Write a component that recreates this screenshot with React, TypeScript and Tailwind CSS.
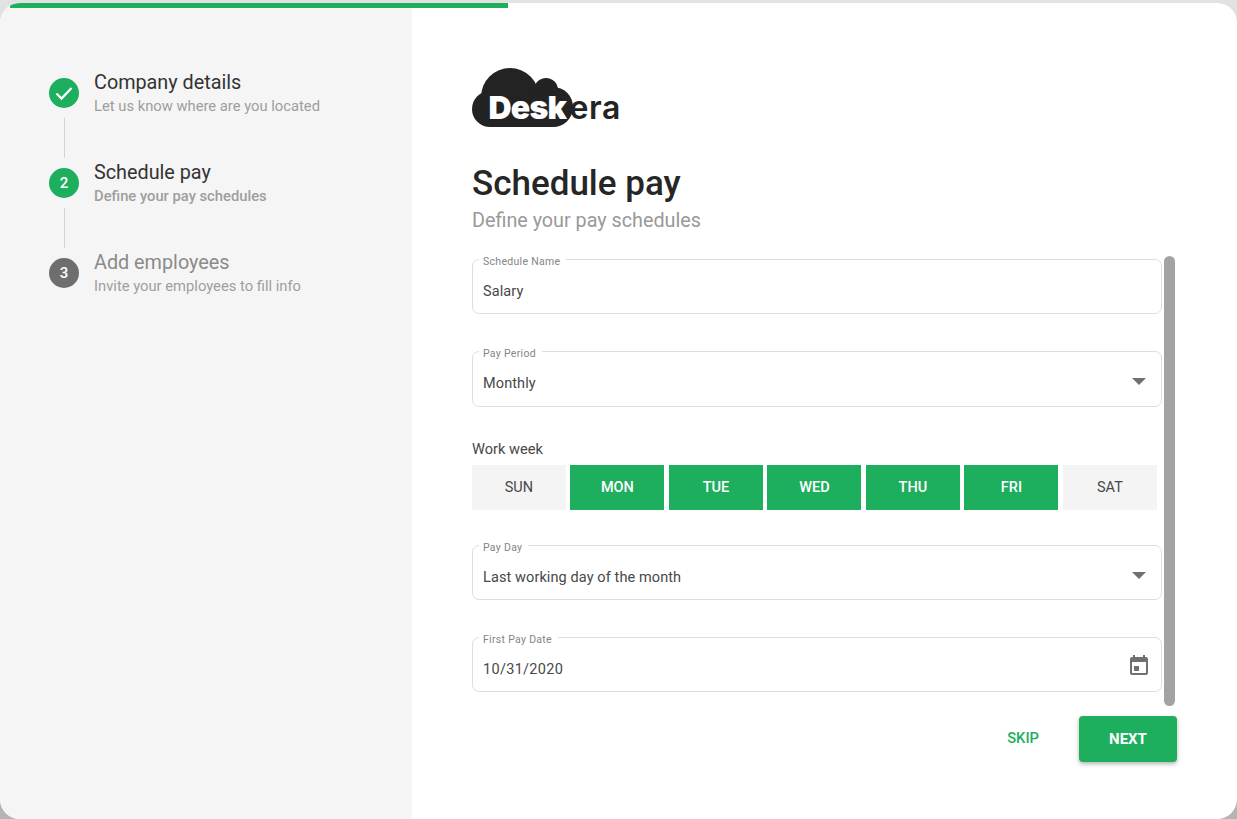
import React from "react";

const font = { fontFamily: "Roboto, sans-serif" };

function Logo() {
  return (
    <svg width="152" height="60" viewBox="472 68 152 60" className="block">
      <g fill="#232323">
        <circle cx="490" cy="109" r="18" />
        <circle cx="510" cy="97" r="29" />
        <circle cx="546" cy="90" r="12" />
        <circle cx="553" cy="107" r="20" />
        <rect x="490" y="96" width="63" height="31" />
      </g>
      <text x="488.5" y="119" fill="#fff" fontFamily="Inter, sans-serif" fontWeight="900" fontSize="32" letterSpacing="-0.8">Desk</text>
      <text x="569.5" y="119" fill="#232323" fontFamily="Inter, sans-serif" fontWeight="600" fontSize="32" letterSpacing="0.6">era</text>
    </svg>
  );
}

function Step({ badge, title, sub, titleClass, subClass, badgeClass, line }: { badge: React.ReactNode; title: string; sub: string; titleClass: string; subClass: string; badgeClass: string; line?: boolean }) {
  return (
    <div className="flex gap-[15px] h-[90px]">
      <div className="flex flex-col items-center w-[30px] pt-[8px]">
        <div className={`w-[30px] h-[30px] rounded-full flex items-center justify-center text-white text-[15px] font-medium ${badgeClass}`}>{badge}</div>
        {line && <div className="w-px h-[40px] mt-[10px] bg-[#d4d4d4]" />}
      </div>
      <div className="pt-[1px]">
        <div className={`text-[19.8px] leading-[24px] ${titleClass}`}>{title}</div>
        <div className={`text-[14.75px] leading-[20px] mt-[1px] ${subClass}`}>{sub}</div>
      </div>
    </div>
  );
}

function Field({ label, value, className, valueClass, right }: { label: string; value: string; className: string; valueClass: string; right?: React.ReactNode }) {
  return (
    <div className={`relative w-[690px] border border-[#dedede] rounded-[7px] flex items-center justify-between pl-[10px] pr-[12px] ${className}`}>
      <span className="absolute left-[6px] -top-[4px] bg-white px-[4px] pr-[6px] text-[10.5px] leading-[12px] text-[#858585] tracking-[0.3px]">{label}</span>
      <span className={`text-[14.5px] text-[#484848] ${valueClass}`}>{value}</span>
      {right}
    </div>
  );
}

const Caret = () => (
  <svg width="14" height="7" viewBox="0 0 14 7" className="mr-[3px] mt-[5px]"><path d="M0 0h14L7 7z" fill="#707070" /></svg>
);

const Calendar = () => (
  <svg width="24" height="24" viewBox="0 0 24 24" className="-mr-[2px] mt-[2px]">
    <path fill="#707070" d="M17 12h-5v5h5v-5zM16 1v2H8V1H6v2H5c-1.11 0-1.99.9-1.99 2L3 19c0 1.1.89 2 2 2h14c1.1 0 2-.9 2-2V5c0-1.1-.9-2-2-2h-1V1h-2zm3 18H5V8h14v11z" transform="translate(24 0) scale(-1 1)" />
  </svg>
);

function Day({ d, on }: { d: string; on: boolean }) {
  return (
    <div className={`h-[45px] w-[94px] flex items-center justify-center text-[14.5px] ${on ? "bg-[#1dae5e] text-white font-medium" : "bg-[#f4f4f4] text-[#484848]"}`}>{d}</div>
  );
}

export default function App() {
  return (
    <div style={font} className="h-[819px] w-[1237px] overflow-hidden pt-[3px] bg-gradient-to-b from-[#e2e2e2] to-[#b4b4b4]">
      <div className="relative flex h-[816px] rounded-[20px] overflow-hidden bg-white">
        <div className="absolute left-[10px] top-0 h-[5px] w-[498px] bg-[#1dae5e] rounded-tl-[4px]" />
        <aside className="w-[412px] bg-[#f5f5f5] pl-[49px] pt-[67px] shrink-0">
          <Step
            badge={<svg width="24" height="24" viewBox="0 0 24 24" fill="none" stroke="#fff" strokeWidth="2.3"><path d="M4.5 12.5l5 5L19.5 7" /></svg>}
            title="Company details"
            sub="Let us know where are you located"
            titleClass="text-[#333333]"
            subClass="text-[#9e9e9e]"
            badgeClass="bg-[#1dae5e]"
            line
          />
          <Step
            badge="2"
            title="Schedule pay"
            sub="Define your pay schedules"
            titleClass="text-[#333333]"
            subClass="text-[#9e9e9e] font-medium"
            badgeClass="bg-[#1dae5e]"
            line
          />
          <Step
            badge="3"
            title="Add employees"
            sub="Invite your employees to fill info"
            titleClass="text-[#8a8a8a]"
            subClass="text-[#9e9e9e]"
            badgeClass="bg-[#6e6e6e]"
          />
        </aside>
        <main className="flex-1 pl-[60px] pt-[65px]">
          <Logo />
          <h1 className="text-[35px] leading-[40px] font-medium text-[#262626] mt-[36px]">Schedule pay</h1>
          <p className="text-[19.75px] leading-[24px] text-[#999999] mt-[5px]">Define your pay schedules</p>
          <div className="relative mt-[23px] w-[705px] h-[450px] pt-[3px]">
            <div className="absolute right-[2px] top-0 h-[450px] w-[11px] rounded-[6px] bg-[#a3a3a3]" />
            <Field label="Schedule Name" value="Salary" className="h-[55px]" valueClass="mt-[11px] tracking-[0.1px]" />
            <Field label="Pay Period" value="Monthly" className="h-[56px] mt-[37px]" valueClass="mt-[9px] tracking-[0.1px]" right={<Caret />} />
            <div className="text-[14.6px] leading-[18px] text-[#484848] mt-[33px]">Work week</div>
            <div className="flex gap-[4.5px] mt-[7px] -ml-[0.1px]">
              <Day d="SUN" on={false} />
              <Day d="MON" on />
              <Day d="TUE" on />
              <Day d="WED" on />
              <Day d="THU" on />
              <Day d="FRI" on />
              <Day d="SAT" on={false} />
            </div>
            <Field label="Pay Day" value="Last working day of the month" className="h-[55px] mt-[35px]" valueClass="mt-[11px] tracking-[0.1px]" right={<Caret />} />
            <Field label="First Pay Date" value="10/31/2020" className="h-[55px] mt-[37px]" valueClass="mt-[11px] tracking-[0.3px]" right={<Calendar />} />
          </div>
          <div className="flex items-center justify-end w-[705px] mt-[10px]">
            <span className="text-[14.75px] font-medium text-[#1dae5e] mr-[40px] -mt-[2px]">SKIP</span>
            <button className="w-[98px] h-[46px] rounded-[4px] bg-[#1dae5e] text-white text-[15px] font-bold shadow-[0_2px_4px_rgba(0,0,0,0.3)]">NEXT</button>
          </div>
        </main>
      </div>
    </div>
  );
}
